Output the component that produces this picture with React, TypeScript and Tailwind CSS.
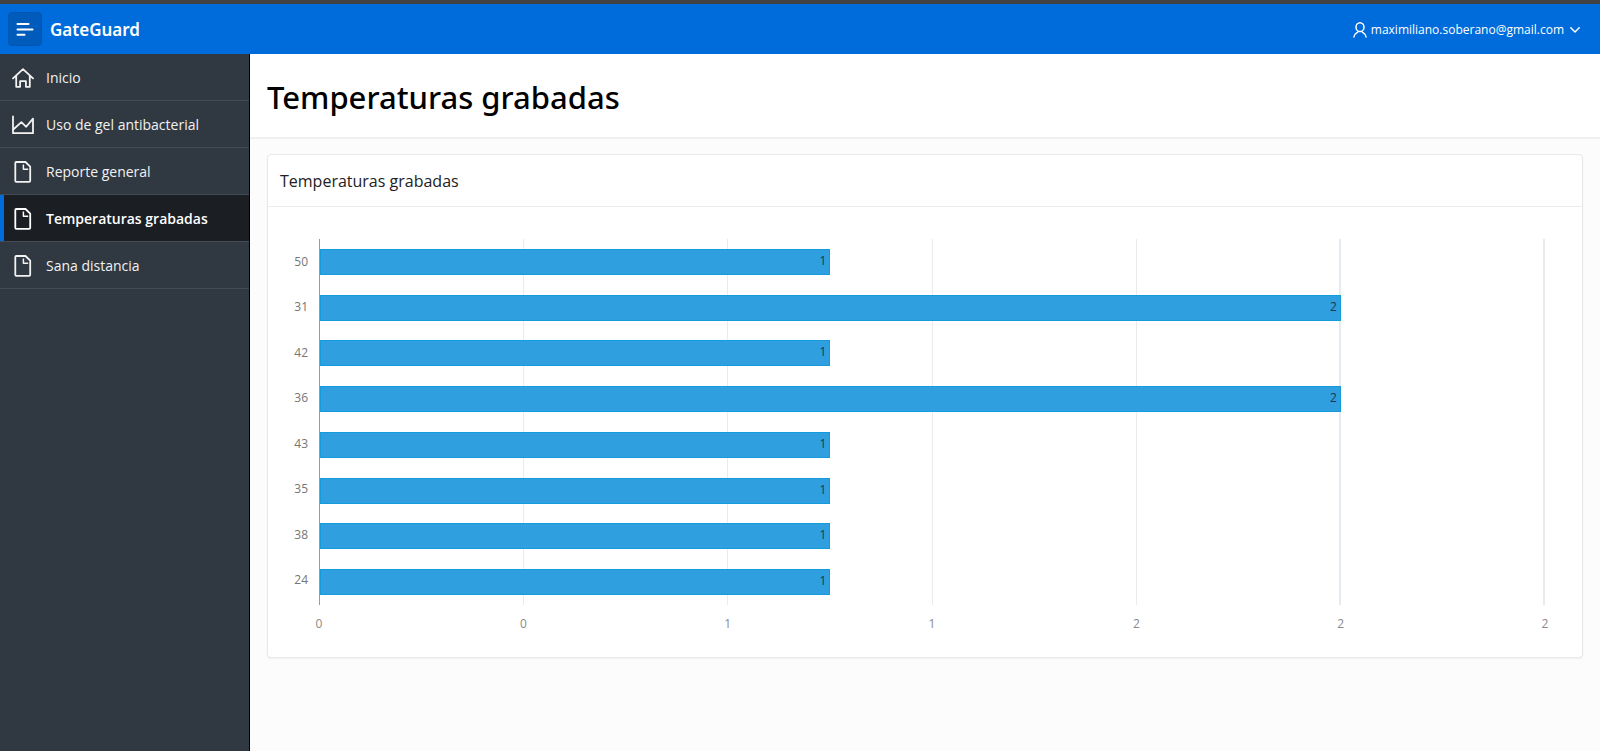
import type { ReactNode } from "react";

const HomeIcon = () => (
  <svg viewBox="0 0 22 20" className="h-5 w-[22px]" fill="none" stroke="currentColor" strokeWidth="1.8" strokeLinejoin="round" strokeLinecap="round">
    <path d="M1 10.4 11 1.2l10 9.2M4.2 8v10.8h3.9v-5.6h5.8v5.6h3.9V8" />
  </svg>
);

const ChartIcon = () => (
  <svg viewBox="0 0 22 20" className="h-5 w-[22px]" fill="none" stroke="currentColor" strokeWidth="1.8" strokeLinejoin="round" strokeLinecap="round">
    <path d="M1 1.5v16.7h20V3.6l-6.8 8.2-4.8-4.6L1.8 14" />
  </svg>
);

const FileIcon = () => (
  <svg viewBox="0 0 22 22" className="h-[22px] w-[22px]" fill="none" stroke="currentColor" strokeWidth="1.8" strokeLinejoin="round">
    <path d="M4.3 1h9.2l4.7 4.7v14.1a1 1 0 0 1-1 1H4.3a1 1 0 0 1-1-1V2a1 1 0 0 1 1-1Z" />
    <path d="M11.4 3.5v4.8h4.8" strokeWidth="1.5" />
  </svg>
);

const UserIcon = () => (
  <svg viewBox="0 0 14 16" className="h-4 w-3.5" fill="none" stroke="currentColor" strokeWidth="1.5" strokeLinecap="round">
    <ellipse cx="7" cy="5.2" rx="4" ry="4.4" />
    <path d="M5.2 9.4C4.8 11 .9 11 .9 15M8.8 9.4c.4 1.6 4.3 1.6 4.3 5.6" />
  </svg>
);

const items: { label: string; icon: ReactNode; active?: boolean }[] = [
  { label: "Inicio", icon: <HomeIcon /> },
  { label: "Uso de gel antibacterial", icon: <ChartIcon /> },
  { label: "Reporte general", icon: <FileIcon /> },
  { label: "Temperaturas grabadas", icon: <FileIcon />, active: true },
  { label: "Sana distancia", icon: <FileIcon /> },
];

const AXIS_MAX = 2.4;
const ticks = ["0", "0", "1", "1", "2", "2", "2"];
const rows = [
  { temp: 50, count: 1 },
  { temp: 31, count: 2 },
  { temp: 42, count: 1 },
  { temp: 36, count: 2 },
  { temp: 43, count: 1 },
  { temp: 35, count: 1 },
  { temp: 38, count: 1 },
  { temp: 24, count: 1 },
];

function Header() {
  return (
    <header className="flex h-[54px] items-center justify-between border-t-4 border-[#424242] bg-[#006bdb] pr-5 pl-2 text-white">
      <div className="flex items-center gap-2">
        <button type="button" aria-label="Menú" className="flex h-[34px] w-[34px] items-center justify-center rounded-sm border border-[#0056b4] bg-[#005bba]">
          <svg viewBox="0 0 18 14" className="h-3.5 w-[18px]" fill="none" stroke="currentColor" strokeWidth="2" strokeLinecap="round">
            <path d="M1.5 2h11M1.5 7.4h15M1.5 12.7h7" />
          </svg>
        </button>
        <a href="#" className="pt-0.5 font-['Noto_Sans','Open_Sans',sans-serif] text-[17px] font-semibold">GateGuard</a>
      </div>
      <button type="button" className="flex items-center gap-1 pt-0.5 text-xs">
        <UserIcon />
        maximiliano.soberano@gmail.com
        <svg viewBox="0 0 10 6" className="ml-0.5 h-1.5 w-2.5" fill="none" stroke="currentColor" strokeWidth="1.5" strokeLinecap="round" strokeLinejoin="round">
          <path d="m.8.8 4.2 4.2L9.2.8" />
        </svg>
      </button>
    </header>
  );
}

function Sidebar() {
  return (
    <nav className="w-[250px] shrink-0 border-r border-black bg-[#303841] text-sm text-[#f2f2f2]">
      <ul>
        {items.map((item) => (
          <li key={item.label} className="border-b border-[#434b54]">
            <a
              href="#"
              aria-current={item.active ? "page" : undefined}
              className={
                item.active
                  ? "flex h-[46px] items-center gap-3 border-l-4 border-[#006bdb] bg-[#1b1e23] pt-px pl-2 font-semibold text-white"
                  : "flex h-[46px] items-center gap-3 pt-px pl-3"
              }
            >
              {item.icon}
              {item.label}
            </a>
          </li>
        ))}
      </ul>
    </nav>
  );
}

function Chart() {
  return (
    <div className="grid grid-cols-[40px_1fr] gap-x-[11px] pt-8 pr-[37px] pb-[25px]">
      <div className="grid h-[366px] grid-rows-8 pb-0.5 text-right text-xs text-[#757575]">
        {rows.map((row) => (
          <span key={row.temp} className="self-center">{row.temp}</span>
        ))}
      </div>
      <div className="grid">
        <div className="col-start-1 row-start-1 grid grid-cols-6 border-l border-[#9a9a9a]">
          {ticks.slice(1).map((_, i) => (
            <div key={i} className={i > 3 ? "border-r-2 border-[#e6ebf0]" : "border-r border-[#ebebeb]"} />
          ))}
        </div>
        <div className="col-start-1 row-start-1 grid grid-rows-8 pl-px">
          {rows.map((row) => (
            <div
              key={row.temp}
              className="flex h-[26px] items-center justify-end self-center border border-[#139bdc] bg-[#309fdf] pr-[3px] pb-0.5 text-xs text-[#18394d]"
              style={{ width: `${(row.count / AXIS_MAX) * 100}%` }}
            >
              {row.count}
            </div>
          ))}
        </div>
      </div>
      <div className="col-start-2 flex justify-between pt-[11px] text-xs text-[#8a8a8a]">
        {ticks.map((tick, i) => (
          <span key={i} className="flex w-0 justify-center">{tick}</span>
        ))}
      </div>
    </div>
  );
}

export default function App() {
  return (
    <div className="flex min-h-screen flex-col font-['Open_Sans','Noto_Sans',sans-serif]">
      <Header />
      <div className="flex flex-1">
        <Sidebar />
        <main className="min-w-0 flex-1 bg-[#fcfcfc]">
          <div className="border-b-2 border-[#f0f0f0] bg-white px-[17px] pt-[23px] pb-5">
            <h1 className="font-['Noto_Sans','Open_Sans',sans-serif] text-[31px] leading-10 font-medium text-black">Temperaturas grabadas</h1>
          </div>
          <section className="mx-[17px] mt-[15px] rounded-sm border border-[#e8e8e8] bg-white shadow-xs">
            <h2 className="border-b border-[#ececec] px-3 pt-3.5 pb-3 text-base leading-[25px] text-[#222]">Temperaturas grabadas</h2>
            <Chart />
          </section>
        </main>
      </div>
    </div>
  );
}
